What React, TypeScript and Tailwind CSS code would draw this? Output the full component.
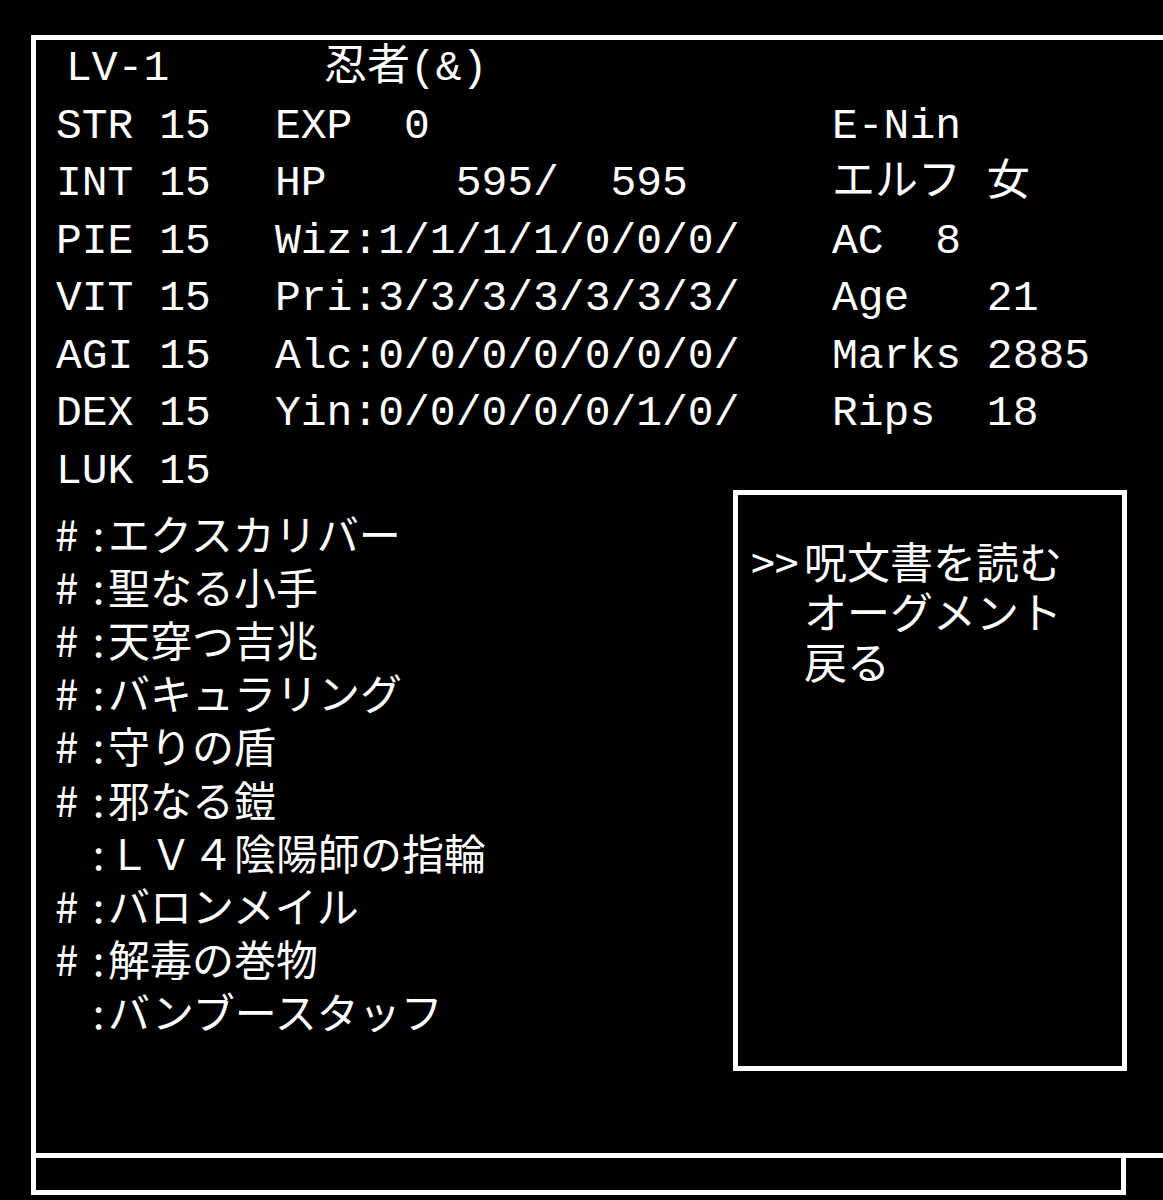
import React from "react";

const mono = { fontFamily: '"Liberation Mono", "Noto Sans CJK JP", monospace' };
const jp = { fontFamily: '"Noto Sans CJK JP", "Noto Sans", sans-serif' };

const stats: [string, string, string][] = [
  ["STR 15", "EXP  0", "E-Nin"],
  ["INT 15", "HP     595/  595", "エルフ 女"],
  ["PIE 15", "Wiz:1/1/1/1/0/0/0/", "AC  8"],
  ["VIT 15", "Pri:3/3/3/3/3/3/3/", "Age   21"],
  ["AGI 15", "Alc:0/0/0/0/0/0/0/", "Marks 2885"],
  ["DEX 15", "Yin:0/0/0/0/0/1/0/", "Rips  18"],
];

const items: [string, string][] = [
  ["#", "エクスカリバー"],
  ["#", "聖なる小手"],
  ["#", "天穿つ吉兆"],
  ["#", "バキュラリング"],
  ["#", "守りの盾"],
  ["#", "邪なる鎧"],
  ["", "ＬＶ４陰陽師の指輪"],
  ["#", "バロンメイル"],
  ["#", "解毒の巻物"],
  ["", "バンブースタッフ"],
];

const menu = ["呪文書を読む", "オーグメント", "戻る"];

export default function App() {
  return (
    <div className="w-[1163px] h-[1200px] bg-black overflow-hidden pt-[35px] pl-[31px] text-white">
      {/* main status window */}
      <div className="w-[1200px] h-[1123px] border-[5px] border-white">
        <div className="text-[43px] leading-none" style={mono}>
          <div className="h-[57.5px] flex items-center pl-[30px] whitespace-pre">
            LV-1      忍者(&amp;)
          </div>
          {stats.map(([a, b, c]) => (
            <div key={a} className="h-[57.5px] flex items-center pl-[20px] whitespace-pre">
              <span className="w-[219px] shrink-0">{a}</span>
              <span className="w-[557px] shrink-0">{b}</span>
              <span>{c}</span>
            </div>
          ))}
        </div>

        <div className="flex">
          <div className="w-[697px]">
            <div
              className="h-[57.5px] flex items-center pl-[20px] whitespace-pre text-[43px] leading-none"
              style={mono}
            >
              LUK 15
            </div>
            <div className="mt-[6px] text-[42px] leading-none" style={jp}>
              {items.map(([mark, name], i) => (
                <div key={i} className="h-[53.2px] flex items-center pl-[19px] whitespace-pre">
                  <span className="w-[34px] shrink-0">{mark}</span>
                  <span className="w-[19px] shrink-0 text-center">:</span>
                  <span>{name}</span>
                </div>
              ))}
            </div>
          </div>

          {/* command sub window */}
          <div
            className="mt-[47.5px] w-[394px] h-[581px] border-[5px] border-white pt-[40px] pl-[13px] text-[43px] leading-none"
            style={jp}
          >
            {menu.map((m, i) => (
              <div key={m} className="h-[50px] flex items-center whitespace-pre">
                <span className="w-[53px] shrink-0">{i === 0 ? ">>" : ""}</span>
                <span>{m}</span>
              </div>
            ))}
          </div>
        </div>
      </div>

      {/* message bar */}
      <div className="w-[1095px] h-[37px] border-[5px] border-t-0 border-white" />
    </div>
  );
}
